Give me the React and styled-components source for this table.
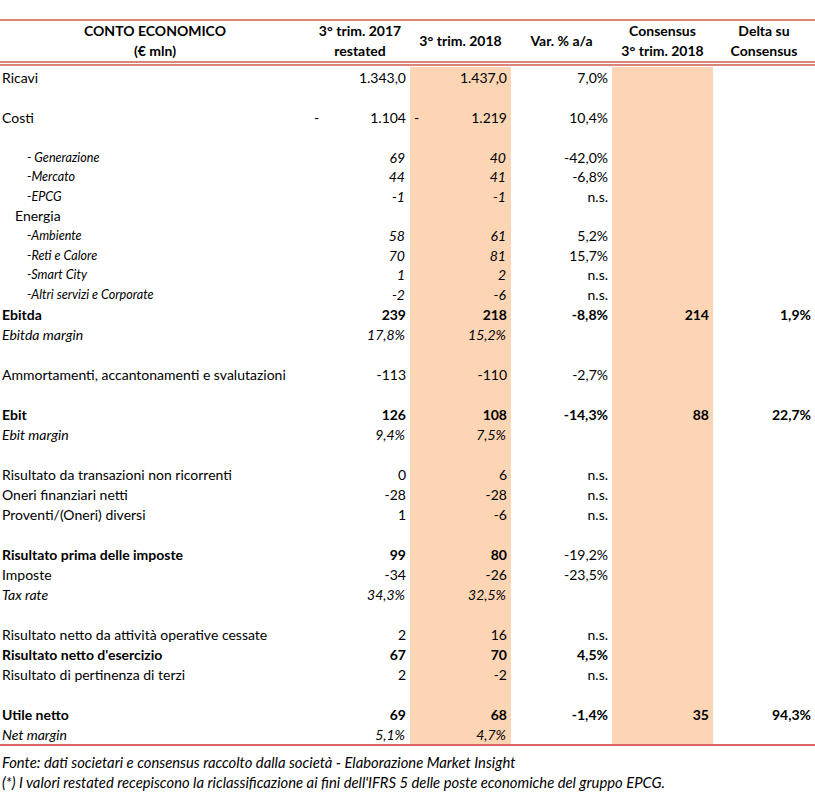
import React from 'react';
import styled, { createGlobalStyle } from 'styled-components';

const GlobalStyle = createGlobalStyle`
  body {
    margin: 0;
    background: #ffffff;
    font-family: Lato, 'Liberation Sans', sans-serif;
    color: #000000;
  }
`;

const COLS = '310px 100px 101px 101px 101px 102px';
const SHADE = '#fcd5b4';
const LINE = '#d98679';

const rows = [
  { label: 'Ricavi', v17: '1.343,0', v18: '1.437,0', vr: '7,0%' },
  { blank: true },
  { label: 'Costi', v17: '1.104', v18: '1.219', vr: '10,4%', dash: true },
  { blank: true },
  { label: '- Generazione', v17: '69', v18: '40', vr: '-42,0%', kind: 'sub' },
  { label: '-Mercato', v17: '44', v18: '41', vr: '-6,8%', kind: 'sub', h: 19 },
  { label: '-EPCG', v17: '-1', v18: '-1', vr: 'n.s.', kind: 'sub' },
  { label: 'Energia', kind: 'group', h: 19 },
  { label: '-Ambiente', v17: '58', v18: '61', vr: '5,2%', kind: 'sub' },
  { label: '-Reti e Calore', v17: '70', v18: '81', vr: '15,7%', kind: 'sub' },
  { label: '-Smart City', v17: '1', v18: '2', vr: 'n.s.', kind: 'sub', h: 19 },
  { label: '-Altri servizi e Corporate', v17: '-2', v18: '-6', vr: 'n.s.', kind: 'sub' },
  { label: 'Ebitda', v17: '239', v18: '218', vr: '-8,8%', cons: '214', delta: '1,9%', kind: 'bold' },
  { label: 'Ebitda margin', v17: '17,8%', v18: '15,2%', kind: 'italic' },
  { blank: true },
  { label: 'Ammortamenti, accantonamenti e svalutazioni', v17: '-113', v18: '-110', vr: '-2,7%' },
  { blank: true },
  { label: 'Ebit', v17: '126', v18: '108', vr: '-14,3%', cons: '88', delta: '22,7%', kind: 'bold' },
  { label: 'Ebit margin', v17: '9,4%', v18: '7,5%', kind: 'italic' },
  { blank: true },
  { label: 'Risultato da transazioni non ricorrenti', v17: '0', v18: '6', vr: 'n.s.' },
  { label: 'Oneri finanziari netti', v17: '-28', v18: '-28', vr: 'n.s.' },
  { label: 'Proventi/(Oneri) diversi', v17: '1', v18: '-6', vr: 'n.s.' },
  { blank: true },
  { label: 'Risultato prima delle imposte', v17: '99', v18: '80', vr: '-19,2%', kind: 'bold', plainVar: true },
  { label: 'Imposte', v17: '-34', v18: '-26', vr: '-23,5%' },
  { label: 'Tax rate', v17: '34,3%', v18: '32,5%', kind: 'italic' },
  { blank: true },
  { label: 'Risultato netto da attività operative cessate', v17: '2', v18: '16', vr: 'n.s.' },
  { label: "Risultato netto d'esercizio", v17: '67', v18: '70', vr: '4,5%', kind: 'bold' },
  { label: 'Risultato di pertinenza di terzi', v17: '2', v18: '-2', vr: 'n.s.' },
  { blank: true },
  { label: 'Utile netto', v17: '69', v18: '68', vr: '-1,4%', cons: '35', delta: '94,3%', kind: 'bold' },
  { label: 'Net margin', v17: '5,1%', v18: '4,7%', kind: 'italic' },
];

function App() {
  return (
    <Page>
      <GlobalStyle />
      <Table>
        <Header>
          <HeadCell>CONTO ECONOMICO<br />(€ mln)</HeadCell>
          <HeadCell>3° trim. 2017<br />restated</HeadCell>
          <HeadCell>3° trim. 2018</HeadCell>
          <HeadCell>Var. % a/a</HeadCell>
          <HeadCell>Consensus<br />3° trim. 2018</HeadCell>
          <HeadCell>Delta su<br />Consensus</HeadCell>
        </Header>
        <Body>
          {rows.map((r, i) => {
            const kind = r.kind || 'normal';
            const numKind = kind === 'sub' ? 'italic' : kind;
            const varKind = kind === 'sub' || kind === 'italic' || r.plainVar ? 'normal' : kind;
            return (
              <Row key={i} $h={r.h || 20}>
                <Label $kind={kind}>{r.label}</Label>
                <Num $kind={numKind}>
                  {r.dash && <Dash>-</Dash>}
                  {r.v17}
                </Num>
                <Num $kind={numKind} $shade>
                  {r.dash && <Dash>-</Dash>}
                  {r.v18}
                </Num>
                <Num $kind={varKind}>{r.vr}</Num>
                <Num $kind={kind} $shade>{r.cons}</Num>
                <Num $kind={kind}>{r.delta}</Num>
              </Row>
            );
          })}
        </Body>
      </Table>
      <Notes>
        <p>Fonte: dati societari e consensus raccolto dalla società - Elaborazione Market Insight</p>
        <p>(*) I valori restated recepiscono la riclassificazione ai fini dell'IFRS 5 delle poste economiche del gruppo EPCG.</p>
      </Notes>
    </Page>
  );
}

const Page = styled.main`
  width: 815px;
  padding-top: 19px;
`;

const Table = styled.section`
  border-top: 2px solid ${LINE};
  border-bottom: 2px solid #e06666;
`;

const Header = styled.div`
  display: grid;
  grid-template-columns: ${COLS};
  height: 40px;
  border-bottom: 5px double ${LINE};
`;

const HeadCell = styled.div`
  display: flex;
  align-items: center;
  justify-content: center;
  text-align: center;
  font-size: 14px;
  font-weight: 700;
  line-height: 20px;
`;

const Body = styled.div`
  padding-top: 1px;
`;

const Row = styled.div`
  display: grid;
  grid-template-columns: ${COLS};
  height: ${p => p.$h}px;
`;

const fontFor = kind => {
  switch (kind) {
    case 'bold':
      return 'font-weight: 700; font-size: 14px;';
    case 'italic':
      return 'font-style: italic; font-size: 14px;';
    case 'sub':
      return 'font-style: italic; font-size: 12.6px;';
    default:
      return 'font-size: 14px;';
  }
};

const Label = styled.div`
  display: flex;
  align-items: center;
  white-space: nowrap;
  padding-left: ${p => (p.$kind === 'sub' ? '27px' : p.$kind === 'group' ? '15px' : '2px')};
  ${p => fontFor(p.$kind)}
`;

const Num = styled.div`
  position: relative;
  display: flex;
  align-items: center;
  justify-content: flex-end;
  padding-right: ${p => (p.$kind === 'italic' ? '5px' : '4px')};
  background: ${p => (p.$shade ? SHADE : 'transparent')};
  white-space: nowrap;
  ${p => fontFor(p.$kind)}
`;

const Dash = styled.span`
  position: absolute;
  left: 4px;
`;

const Notes = styled.footer`
  padding-top: 6px;
  padding-left: 2px;
  p {
    margin: 0;
    font-style: italic;
    font-size: 14.8px;
    line-height: 20px;
  }
`;

export default App;
